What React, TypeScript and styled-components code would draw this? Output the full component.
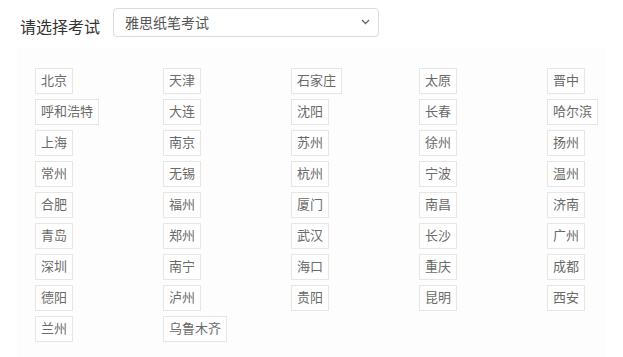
import React from "react";
import styled, { createGlobalStyle } from "styled-components";

const cities = [
  "北京", "天津", "石家庄", "太原", "晋中",
  "呼和浩特", "大连", "沈阳", "长春", "哈尔滨",
  "上海", "南京", "苏州", "徐州", "扬州",
  "常州", "无锡", "杭州", "宁波", "温州",
  "合肥", "福州", "厦门", "南昌", "济南",
  "青岛", "郑州", "武汉", "长沙", "广州",
  "深圳", "南宁", "海口", "重庆", "成都",
  "德阳", "泸州", "贵阳", "昆明", "西安",
  "兰州", "乌鲁木齐",
];

const GlobalStyle = createGlobalStyle`
  html, body {
    margin: 0;
    padding: 0;
    background: #fff;
    font-family: "Liberation Sans", "Noto Sans CJK SC", sans-serif;
  }
`;

const App = () => {
  return (
    <Page>
      <GlobalStyle />
      <Header>
        <Label>请选择考试</Label>
        <Select>
          <span>雅思纸笔考试</span>
          <svg width="9" height="6" viewBox="0 0 9 6">
            <path d="M1 1 L4.5 4.5 L8 1" fill="none" stroke="#666" strokeWidth="1.3" />
          </svg>
        </Select>
      </Header>
      <Panel>
        <CityGrid>
          {cities.map((c) => (
            <Tag key={c}>{c}</Tag>
          ))}
        </CityGrid>
      </Panel>
    </Page>
  );
};

const Page = styled.div`
  width: 623px;
  height: 357px;
  overflow: hidden;
`;

const Header = styled.div`
  display: flex;
  align-items: flex-start;
  gap: 13px;
  padding: 8px 0 0 20px;
`;

const Label = styled.div`
  font-size: 16px;
  color: #333;
  line-height: 29px;
  padding-top: 5px;
`;

const Select = styled.div`
  box-sizing: border-box;
  width: 266px;
  height: 29px;
  border: 1px solid #dcdcdc;
  border-radius: 4px;
  display: flex;
  align-items: center;
  justify-content: space-between;
  padding: 0 8px 1px 11px;
  font-size: 14px;
  color: #555;
  background: #fff;
`;

const Panel = styled.div`
  margin: 6px 18px 0 17px;
  padding: 20px 0 20px 18px;
  background: #fdfdfd;
`;

const CityGrid = styled.div`
  display: grid;
  grid-template-columns: repeat(5, 128px);
  row-gap: 5px;
  justify-items: start;
`;

const Tag = styled.span`
  box-sizing: border-box;
  height: 26px;
  line-height: 24px;
  padding: 0 5px;
  border: 1px solid #e6e6e6;
  background: #fff;
  font-size: 13px;
  color: #6a6a6a;
`;

export default App;
